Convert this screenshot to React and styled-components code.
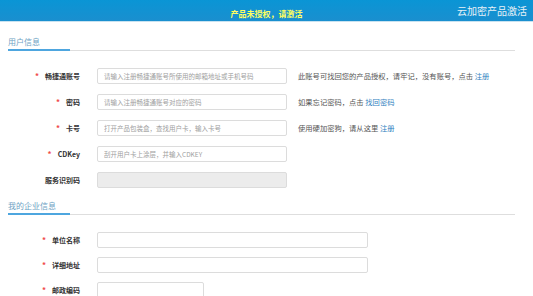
import React from "react"
import styled, { createGlobalStyle } from "styled-components"

const Global = createGlobalStyle`
   body {
      margin: 0;
      background: #fff;
      font-family: "Noto Sans CJK SC", "Noto Sans", sans-serif;
   }
`

const Bar = styled.div`
   display: grid;
   grid-template-columns: 1fr auto 1fr;
   height: 22px;
   background: linear-gradient(#0a95d5, #1a8fcf);
   border-bottom: 1px solid #c8e2f0;
   box-sizing: border-box;
`

const Warn = styled.span`
   grid-column: 2;
   align-self: end;
   padding-bottom: 1px;
   color: #ffff5e;
   font-size: 8px;
   font-weight: 700;
   line-height: 12px;
`

const Brand = styled.span`
   justify-self: end;
   align-self: center;
   padding-right: 6px;
   color: #e6f1f7;
   font-size: 10px;
   line-height: 14px;
`

const Page = styled.div`
   padding: 0 18px 0 8px;
`

const Head = styled.div`
   display: flex;
   padding-top: ${p => p.top}px;
   border-bottom: 1px solid #dedede;
`

const Title = styled.span`
   width: 62px;
   padding-bottom: 1px;
   margin-bottom: -1px;
   border-bottom: 2px solid #4ea6df;
   color: #6e9fc4;
   font-size: 8px;
   line-height: 12px;
`

const Form = styled.div`
   display: flex;
   flex-direction: column;
   gap: ${p => p.gap}px;
   padding-top: 17px;
`

const Row = styled.div`
   display: flex;
   align-items: center;
   height: 16px;
`

const Label = styled.div`
   width: 72px;
   margin-right: 17px;
   text-align: right;
   color: #333;
   font-size: 7px;
   font-weight: 700;
   line-height: 12px;
   white-space: nowrap;
`

const Star = styled.span`
   color: #f04848;
   font-size: 8px;
   margin-right: 6px;
`

const Input = styled.input`
   box-sizing: border-box;
   width: ${p => p.w}px;
   height: 16px;
   padding: 0 6px;
   border: 1px solid #dcdcdc;
   border-radius: 2px;
   background: ${p => (p.disabled ? "#ececec" : "#fff")};
   font-family: inherit;
   font-size: 6.5px;
   outline: none;
   &::placeholder {
      color: #a0a0a0;
   }
`

const Help = styled.span`
   margin-left: 11px;
   color: #555;
   font-size: 7.3px;
   white-space: nowrap;
`

const Link = styled.a`
   color: #2f7fc0;
   text-decoration: none;
`

const Field = ({ label, star, w, hint, ...rest }) => (
   <Row>
      <Label>
         {star && <Star>*</Star>}
         {label}
      </Label>
      <Input w={w} {...rest} />
      {hint && <Help>{hint}</Help>}
   </Row>
)

const App = () => {
   return (
      <>
         <Global />
         <Bar>
            <Warn>产品未授权，请激活</Warn>
            <Brand>云加密产品激活</Brand>
         </Bar>
         <Page>
            <Head top={14}>
               <Title>用户信息</Title>
            </Head>
            <Form gap={10}>
               <Field
                  star
                  label="畅捷通账号"
                  w={190}
                  placeholder="请输入注册畅捷通账号所使用的邮箱地址或手机号码"
                  hint={<>此账号可找回您的产品授权，请牢记，没有账号，点击 <Link>注册</Link></>}
               />
               <Field
                  star
                  label="密码"
                  w={190}
                  placeholder="请输入注册畅捷通账号对应的密码"
                  hint={<>如果忘记密码，点击 <Link>找回密码</Link></>}
               />
               <Field
                  star
                  label="卡号"
                  w={190}
                  placeholder="打开产品包装盒，查找用户卡，输入卡号"
                  hint={<>使用硬加密狗，请从这里 <Link>注册</Link></>}
               />
               <Field star label="CDKey" w={190} placeholder="刮开用户卡上涂层，并输入CDKEY" />
               <Field label="服务识别码" w={190} disabled />
            </Form>
            <Head top={12}>
               <Title>我的企业信息</Title>
            </Head>
            <Form gap={9}>
               <Field star label="单位名称" w={271} />
               <Field star label="详细地址" w={271} />
               <Field star label="邮政编码" w={107} />
            </Form>
         </Page>
      </>
   )
}

export default App
